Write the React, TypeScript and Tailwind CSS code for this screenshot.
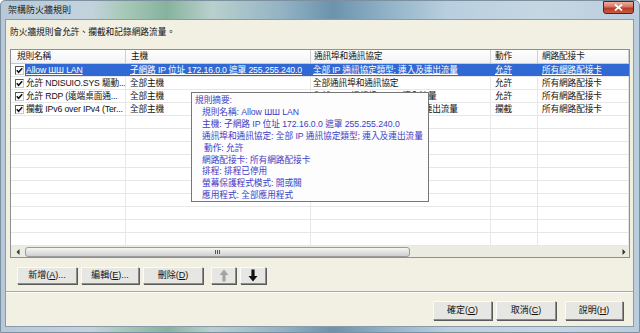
import React from "react";

const F = "font-['Liberation_Sans','Noto_Sans_CJK_TC',sans-serif]";

const cols = [115, 185, 180, 47, 91];

type Row = { name: string; host: string; port: string; action: string; nic: string };

const rows: Row[] = [
  { name: "Allow ШШ LAN", host: "子網路 IP 位址 172.16.0.0 遮罩 255.255.240.0", port: "全部 IP 通訊協定類型; 連入及連出流量", action: "允許", nic: "所有網路配接卡" },
  { name: "允許 NDISUIO.SYS 驅動...", host: "全部主機", port: "全部通訊埠和通訊協定", action: "允許", nic: "所有網路配接卡" },
  { name: "允許 RDP (遠端桌面通...", host: "全部主機", port: "全部 TCP 通訊埠 3389; 連入流量", action: "允許", nic: "所有網路配接卡" },
  { name: "攔截 IPv6 over IPv4 (Ter...", host: "全部主機", port: "全部 IP 通訊協定類型; 連入及連出流量", action: "攔截", nic: "所有網路配接卡" },
];

const headers = ["規則名稱", "主機", "通訊埠和通訊協定", "動作", "網路配接卡"];
const headerPad = [6, 5, 3, 4, 4];
const cellPad = [1, 4, 2, 4, 4];

function Check() {
  return (
    <div className="w-[9px] h-[9px] shrink-0 bg-white border border-t-[#5a5a5a] border-l-[#5a5a5a] border-r-[#c8c8c8] border-b-[#c8c8c8] flex items-center justify-center">
      <svg width="7" height="7" viewBox="0 0 7 7">
        <path d="M0.8 3.2 L2.6 5.2 L6.2 1.2" stroke="#111" strokeWidth="1.6" fill="none" />
      </svg>
    </div>
  );
}

function Btn({ w, h, children }: { w: number; h: number; children: React.ReactNode }) {
  return (
    <div
      style={{ width: w, height: h }}
      className="shrink-0 flex items-center justify-center bg-[#e6e6e2] border border-t-[#fbfbfb] border-l-[#fbfbfb] border-r-[#8c8c8c] border-b-[#8c8c8c] shadow-[1px_1px_0_#5a5a5a] text-[9px] text-[#111] leading-none"
    >
      {children}
    </div>
  );
}

function Label({ text, k, tail = "" }: { text: string; k: string; tail?: string }) {
  return (
    <span>
      {text}(<span className="underline">{k}</span>){tail}
    </span>
  );
}

function Arrow({ up, color }: { up: boolean; color: string }) {
  return (
    <svg width="10" height="13" viewBox="0 0 10 13">
      {up ? (
        <path d="M5 0.5 L9.5 6 L6.6 6 L6.6 12.5 L3.4 12.5 L3.4 6 L0.5 6 Z" fill={color} />
      ) : (
        <path d="M5 12.5 L9.5 7 L6.6 7 L6.6 0.5 L3.4 0.5 L3.4 7 L0.5 7 Z" fill={color} />
      )}
    </svg>
  );
}

export default function App() {
  const emptyRows = Array.from({ length: 10 });
  return (
    <div className={`${F} relative w-[640px] h-[333px] overflow-hidden flex flex-col bg-[linear-gradient(90deg,#b7c9d8_0%,#c3d3de_14%,#a9c9b9_19%,#86b39d_26%,#b9d0cd_33%,#93b3c4_44%,#6b93ab_52%,#8fb0c6_60%,#b9cfdf_70%,#c6d7e3_85%,#b9cddd_100%)] border border-[#7d909f] rounded-t-[5px]`}>
      {/* Title bar */}
      <div className="h-[18px] shrink-0 flex items-start justify-between">
        <div className="pl-[7px] pt-[3px] text-[9px] leading-[12px] text-[#1b1b1b]">架構防火牆規則</div>
        <div className="mr-[5px] w-[31px] h-[13px] rounded-b-[3px] border border-[#5b1f17] bg-[linear-gradient(180deg,#eab0a2_0%,#d7735f_45%,#b8392a_55%,#c95b3e_100%)] flex items-center justify-center">
          <svg width="9" height="7" viewBox="0 0 9 7">
            <path d="M1 0.5 L8 6.5 M8 0.5 L1 6.5" stroke="#fff" strokeWidth="1.8" />
          </svg>
        </div>
      </div>

      {/* Client */}
      <div className="flex-1 ml-[4px] mr-[5px] mb-[5px] border border-[#8a9aa8] bg-[#f1f0e3] flex flex-col">
        <div className="pl-[4px] pt-[6px] h-[18px] text-[8.7px] leading-[12px] text-[#111]">防火牆規則會允許、攔截和記錄網路流量。</div>

        {/* List view */}
        <div className="mt-[11px] ml-[4px] w-[620px] h-[209px] border border-[#8e8f8f] bg-white flex flex-col text-[8.7px] tracking-[-0.15px] text-[#111]">
          {/* header */}
          <div className="h-[14px] shrink-0 flex border-b border-[#c9c9c9] bg-[linear-gradient(180deg,#ffffff,#f3f3f3)]">
            {headers.map((h, i) => (
              <div
                key={h}
                style={{ width: cols[i], paddingLeft: headerPad[i] }}
                className="shrink-0 border-r border-[#cfcfcf] leading-[13px] whitespace-nowrap overflow-hidden"
              >
                {h}
              </div>
            ))}
            <div className="flex-1" />
          </div>

          {/* body */}
          <div className="flex-1 overflow-hidden">
            {rows.map((r, ri) => {
              const sel = ri === 0;
              const cells = [r.host, r.port, r.action, r.nic];
              return (
                <div key={ri} className="h-[13px] flex border-b border-[#e7e7e7]">
                  <div style={{ width: cols[0] }} className={`shrink-0 flex items-center ${sel ? "" : "border-r border-[#e7e7e7]"}`}>
                    <div className="pl-[4px] pr-[1px]">
                      <Check />
                    </div>
                    <div className={`flex-1 h-full leading-[12px] whitespace-nowrap overflow-hidden pl-[1px] ${sel ? "bg-[#3169d4] text-white underline" : ""}`}>
                      {r.name}
                    </div>
                  </div>
                  {cells.map((c, ci) => (
                    <div
                      key={ci}
                      style={{ width: cols[ci + 1], paddingLeft: cellPad[ci + 1] }}
                      className={`shrink-0 leading-[12px] whitespace-nowrap overflow-hidden ${sel ? "bg-[#3169d4] text-white underline" : "border-r border-[#e7e7e7]"}`}
                    >
                      {c}
                    </div>
                  ))}
                </div>
              );
            })}
            {emptyRows.map((_, i) => (
              <div key={i} className="h-[13px] flex border-b border-[#e7e7e7]">
                {cols.map((w, ci) => (
                  <div key={ci} style={{ width: w }} className="shrink-0 border-r border-[#e7e7e7]" />
                ))}
              </div>
            ))}
          </div>

          {/* horizontal scrollbar */}
          <div className="h-[11px] shrink-0 flex items-center bg-[#ecebe1]">
            <div className="w-[14px] h-full flex items-center justify-center">
              <svg width="4" height="6" viewBox="0 0 4 6"><path d="M3.5 0 L0.5 3 L3.5 6 Z" fill="#333" /></svg>
            </div>
            <div className="w-[385px] h-[10px] rounded-[3px] border border-[#9b9b9b] bg-[linear-gradient(180deg,#f6f6f6_0%,#e2e2e2_50%,#cfcfcf_100%)] flex items-center justify-center">
              <div className="flex gap-[1px]">
                <div className="w-[1px] h-[4px] bg-[#555]" />
                <div className="w-[1px] h-[4px] bg-[#555]" />
                <div className="w-[1px] h-[4px] bg-[#555]" />
              </div>
            </div>
            <div className="flex-1" />
            <div className="w-[11px] h-full flex items-center justify-center">
              <svg width="4" height="6" viewBox="0 0 4 6"><path d="M0.5 0 L3.5 3 L0.5 6 Z" fill="#333" /></svg>
            </div>
          </div>
        </div>

        {/* buttons row */}
        <div className="mt-[9px] ml-[11px] flex items-center">
          <Btn w={60} h={17}><Label text="新增" k="A" tail="..." /></Btn>
          <div className="w-[4px]" />
          <Btn w={58} h={17}><Label text="編輯" k="E" tail="..." /></Btn>
          <div className="w-[4px]" />
          <Btn w={60} h={17}><Label text="刪除" k="D" /></Btn>
          <div className="w-[8px]" />
          <Btn w={25} h={17}><Arrow up color="#a3a3a3" /></Btn>
          <div className="w-[4px]" />
          <Btn w={26} h={17}><Arrow up={false} color="#111" /></Btn>
        </div>

        {/* separator */}
        <div className="mt-[7px] h-[2px] border-t border-[#a9a9a0] border-b border-b-white" />

        {/* bottom buttons */}
        <div className="mt-[8px] mr-[10px] flex justify-end gap-[4px]">
          <Btn w={59} h={19}><Label text="確定" k="O" /></Btn>
          <Btn w={60} h={19}><Label text="取消" k="C" /></Btn>
          <div className="w-[1px]" />
          <Btn w={58} h={19}><Label text="說明" k="H" /></Btn>
        </div>
      </div>

      {/* tooltip */}
      <div className="absolute left-[190px] top-[91px] w-[238px] h-[110px] bg-[#fdfdfd] border border-[#767676] text-[8.7px] leading-[11.9px] tracking-[-0.05px] text-[#3c3cc6] pt-[2px]">
        <div className="pl-[3px]">規則摘要:</div>
        <div className="pl-[10px]">規則名稱: Allow ШШ LAN</div>
        <div className="pl-[10px]">主機: 子網路 IP 位址 172.16.0.0 遮罩 255.255.240.0</div>
        <div className="pl-[10px] whitespace-nowrap">通訊埠和通訊協定: 全部 IP 通訊協定類型; 連入及連出流量</div>
        <div className="pl-[12px]">動作: 允許</div>
        <div className="pl-[10px]">網路配接卡: 所有網路配接卡</div>
        <div className="pl-[10px]">排程: 排程已停用</div>
        <div className="pl-[10px]">螢幕保護程式模式: 開或關</div>
        <div className="pl-[10px]">應用程式: 全部應用程式</div>
      </div>
    </div>
  );
}
